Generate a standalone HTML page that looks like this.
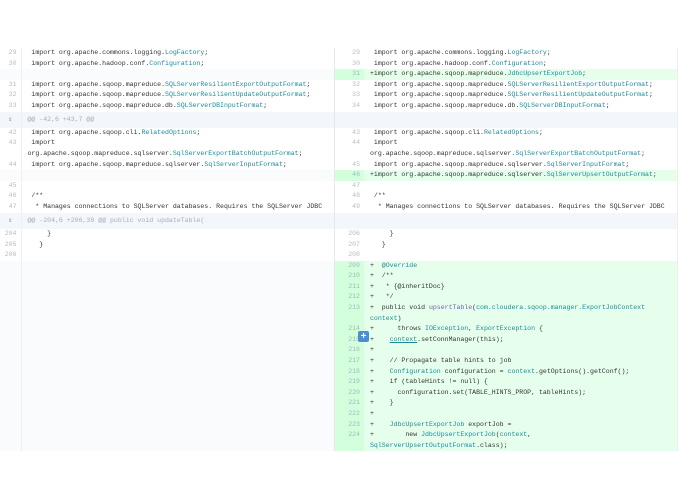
<!DOCTYPE html>
<html><head><meta charset="utf-8"><style>
html,body{margin:0;padding:0;background:#fff;width:695px;height:494px;overflow:hidden}
table{position:absolute;left:0;top:48px;border-collapse:collapse;table-layout:fixed;font-family:"Liberation Mono",monospace;font-size:6.55px;color:#333}
td{padding:0;vertical-align:top;line-height:10.6px;height:10.6px;white-space:pre;overflow:hidden}
td.n{color:#bbb;text-align:right;padding-right:4px;box-sizing:border-box}
td.ln{border-right:1px solid #f0f0f0}
td.rn{border-left:1px solid #e8e8e8}
td.c{padding-left:6px}
td.rc{border-right:1px solid #eee}
tr.w td{height:21.2px}
td.e{background:#fafbfc}
td.gn{background:#d4ffdc;color:#9bb}
td.gc{background:#e6ffed}
tr.h td{background:#f3f7fb;height:16.3px;line-height:16.3px;color:#aab}
.t{color:#1a8a9a}
.u{text-decoration:underline}
.plus{position:absolute;left:358px;top:331px;width:11px;height:11px;background:#4a8fd6;color:#fff;font:bold 10px/11px "Liberation Sans",sans-serif;text-align:center;border-radius:2px}
</style></head><body>
<table>
<colgroup><col style="width:21px"><col style="width:313px"><col style="width:30px"><col style="width:313px"></colgroup>
<tr><td class="n ln">29</td><td class="c"> import org.apache.commons.logging.<span class="t">LogFactory</span>;</td><td class="n rn">29</td><td class="c rc"> import org.apache.commons.logging.<span class="t">LogFactory</span>;</td></tr>
<tr><td class="n ln">30</td><td class="c"> import org.apache.hadoop.conf.<span class="t">Configuration</span>;</td><td class="n rn">30</td><td class="c rc"> import org.apache.hadoop.conf.<span class="t">Configuration</span>;</td></tr>
<tr><td class="n ln e"></td><td class="c e"></td><td class="n rn gn">31</td><td class="c rc gc">+import org.apache.sqoop.mapreduce.<span class="t">JdbcUpsertExportJob</span>;</td></tr>
<tr><td class="n ln">31</td><td class="c"> import org.apache.sqoop.mapreduce.<span class="t">SQLServerResilientExportOutputFormat</span>;</td><td class="n rn">32</td><td class="c rc"> import org.apache.sqoop.mapreduce.<span class="t">SQLServerResilientExportOutputFormat</span>;</td></tr>
<tr><td class="n ln">32</td><td class="c"> import org.apache.sqoop.mapreduce.<span class="t">SQLServerResilientUpdateOutputFormat</span>;</td><td class="n rn">33</td><td class="c rc"> import org.apache.sqoop.mapreduce.<span class="t">SQLServerResilientUpdateOutputFormat</span>;</td></tr>
<tr><td class="n ln">33</td><td class="c"> import org.apache.sqoop.mapreduce.db.<span class="t">SQLServerDBInputFormat</span>;</td><td class="n rn">34</td><td class="c rc"> import org.apache.sqoop.mapreduce.db.<span class="t">SQLServerDBInputFormat</span>;</td></tr>
<tr class="h"><td class="n ln" style="color:#889;text-align:center;padding:0">⇕</td><td class="c">@@ -42,6 +43,7 @@</td><td class="n rn"></td><td class="c rc"></td></tr>
<tr><td class="n ln">42</td><td class="c"> import org.apache.sqoop.cli.<span class="t">RelatedOptions</span>;</td><td class="n rn">43</td><td class="c rc"> import org.apache.sqoop.cli.<span class="t">RelatedOptions</span>;</td></tr>
<tr class="w"><td class="n ln">43</td><td class="c"> import
org.apache.sqoop.mapreduce.sqlserver.<span class="t">SqlServerExportBatchOutputFormat</span>;</td><td class="n rn">44</td><td class="c rc"> import
org.apache.sqoop.mapreduce.sqlserver.<span class="t">SqlServerExportBatchOutputFormat</span>;</td></tr>
<tr><td class="n ln">44</td><td class="c"> import org.apache.sqoop.mapreduce.sqlserver.<span class="t">SqlServerInputFormat</span>;</td><td class="n rn">45</td><td class="c rc"> import org.apache.sqoop.mapreduce.sqlserver.<span class="t">SqlServerInputFormat</span>;</td></tr>
<tr><td class="n ln e"></td><td class="c e"></td><td class="n rn gn">46</td><td class="c rc gc">+import org.apache.sqoop.mapreduce.sqlserver.<span class="t">SqlServerUpsertOutputFormat</span>;</td></tr>
<tr><td class="n ln">45</td><td class="c"></td><td class="n rn">47</td><td class="c rc"></td></tr>
<tr><td class="n ln">46</td><td class="c"> /**</td><td class="n rn">48</td><td class="c rc"> /**</td></tr>
<tr><td class="n ln">47</td><td class="c">  * Manages connections to SQLServer databases. Requires the SQLServer JDBC</td><td class="n rn">49</td><td class="c rc">  * Manages connections to SQLServer databases. Requires the SQLServer JDBC</td></tr>
<tr class="h"><td class="n ln" style="color:#889;text-align:center;padding:0">⇕</td><td class="c">@@ -204,6 +206,39 @@ public void updateTable(</td><td class="n rn"></td><td class="c rc"></td></tr>
<tr><td class="n ln">204</td><td class="c">     }</td><td class="n rn">206</td><td class="c rc">     }</td></tr>
<tr><td class="n ln">205</td><td class="c">   }</td><td class="n rn">207</td><td class="c rc">   }</td></tr>
<tr><td class="n ln">206</td><td class="c"></td><td class="n rn">208</td><td class="c rc"></td></tr>
<tr><td class="n ln e"></td><td class="c e"></td><td class="n rn gn">209</td><td class="c rc gc">+  <span class="t">@Override</span></td></tr>
<tr><td class="n ln e"></td><td class="c e"></td><td class="n rn gn">210</td><td class="c rc gc">+  /**</td></tr>
<tr><td class="n ln e"></td><td class="c e"></td><td class="n rn gn">211</td><td class="c rc gc">+   * {@inheritDoc}</td></tr>
<tr><td class="n ln e"></td><td class="c e"></td><td class="n rn gn">212</td><td class="c rc gc">+   */</td></tr>
<tr class="w"><td class="n ln e"></td><td class="c e"></td><td class="n rn gn">213</td><td class="c rc gc">+  public void <span style="color:#795da3">upsertTable</span>(<span class="t">com.cloudera.sqoop.manager.ExportJobContext</span>
<span class="t">context</span>)</td></tr>
<tr><td class="n ln e"></td><td class="c e"></td><td class="n rn gn">214</td><td class="c rc gc">+      throws <span class="t">IOException</span>, <span class="t">ExportException</span> {</td></tr>
<tr><td class="n ln e"></td><td class="c e"></td><td class="n rn gn">215</td><td class="c rc gc">+    <span class="t u">context</span>.setConnManager(this);</td></tr>
<tr><td class="n ln e"></td><td class="c e"></td><td class="n rn gn">216</td><td class="c rc gc">+</td></tr>
<tr><td class="n ln e"></td><td class="c e"></td><td class="n rn gn">217</td><td class="c rc gc">+    // Propagate table hints to job</td></tr>
<tr><td class="n ln e"></td><td class="c e"></td><td class="n rn gn">218</td><td class="c rc gc">+    <span class="t">Configuration</span> configuration = <span class="t">context</span>.getOptions().getConf();</td></tr>
<tr><td class="n ln e"></td><td class="c e"></td><td class="n rn gn">219</td><td class="c rc gc">+    if (tableHints != null) {</td></tr>
<tr><td class="n ln e"></td><td class="c e"></td><td class="n rn gn">220</td><td class="c rc gc">+      configuration.set(TABLE_HINTS_PROP, tableHints);</td></tr>
<tr><td class="n ln e"></td><td class="c e"></td><td class="n rn gn">221</td><td class="c rc gc">+    }</td></tr>
<tr><td class="n ln e"></td><td class="c e"></td><td class="n rn gn">222</td><td class="c rc gc">+</td></tr>
<tr><td class="n ln e"></td><td class="c e"></td><td class="n rn gn">223</td><td class="c rc gc">+    <span class="t">JdbcUpsertExportJob</span> exportJob =</td></tr>
<tr class="w"><td class="n ln e"></td><td class="c e"></td><td class="n rn gn">224</td><td class="c rc gc">+        new <span class="t">JdbcUpsertExportJob</span>(<span class="t">context</span>,
<span class="t">SqlServerUpsertOutputFormat</span>.class);</td></tr>
</table>
<div class="plus">+</div>
</body></html>
